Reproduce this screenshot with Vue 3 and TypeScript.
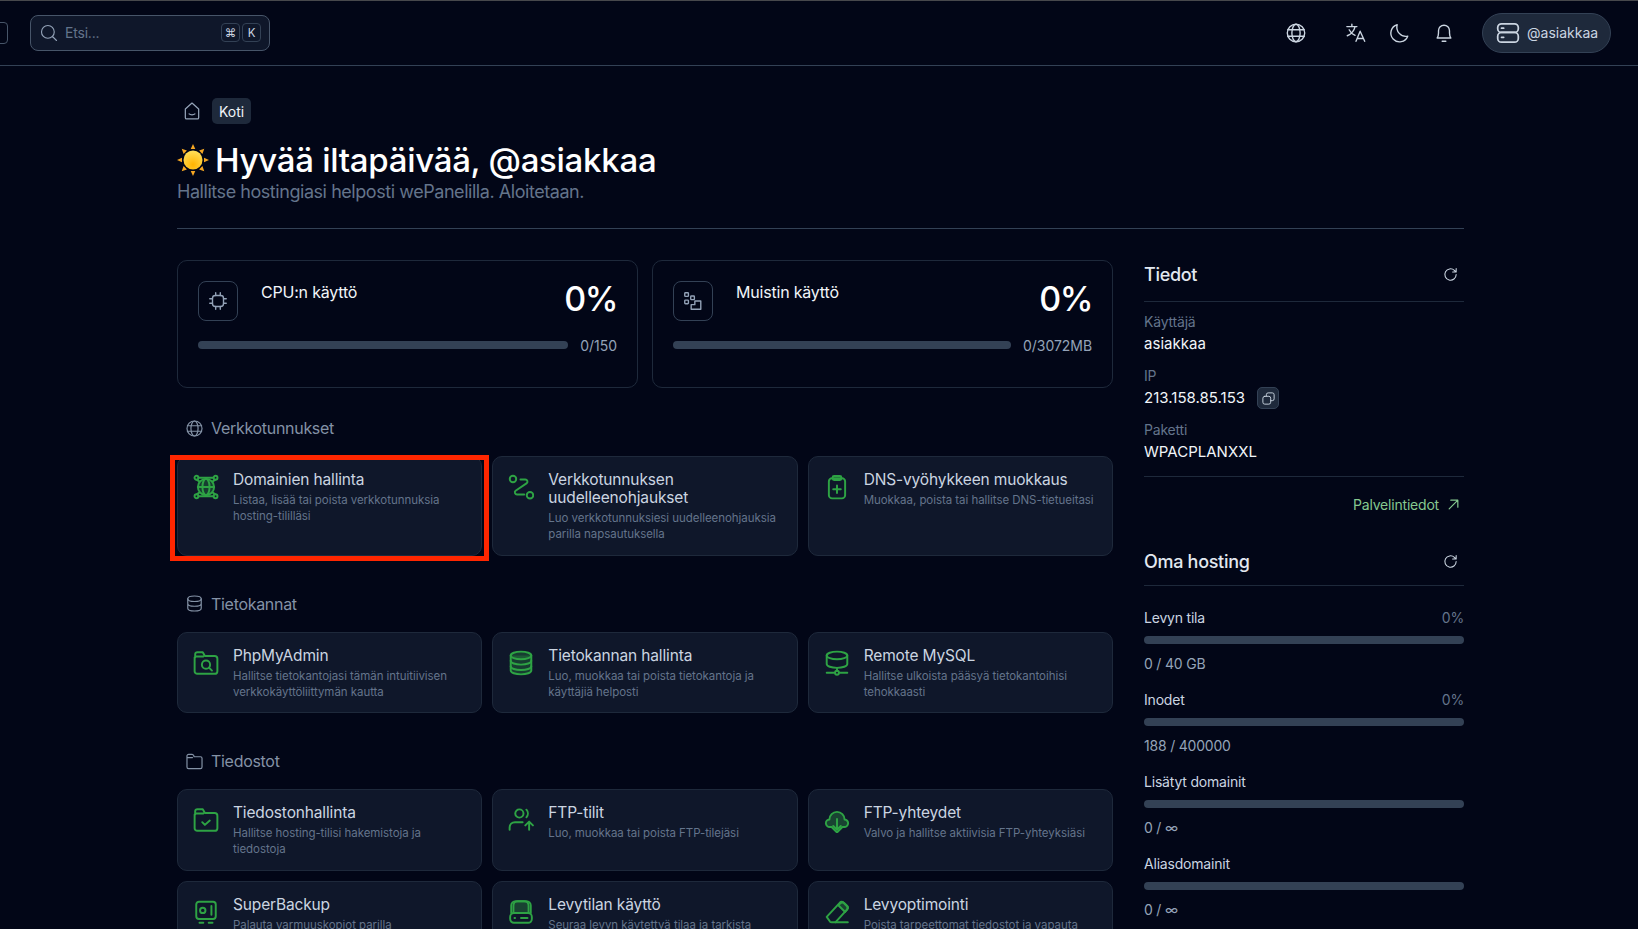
<script setup lang="ts">
interface Item { icon: string; title: string; desc: string; marked?: boolean }
interface Section { icon: string; name: string; items: Item[] }

const icons: Record<string, string> = {
  search: '<circle cx="10.5" cy="10.5" r="8.5"/><path d="M17 17l5 5"/>',
  globe: '<circle cx="12" cy="12" r="9.5"/><ellipse cx="12" cy="12" rx="4.5" ry="9.5"/><path d="M3 8.5h18M3 15.5h18"/>',
  translate: '<path d="M2 5h11M7.5 2.5V5M11 5c-1 4.500-4 8-8.500 10M4.500 8.500c1.500 3 4 5 6.500 6M12 21l4.500-11L21.500 21M13.500 18h6.500"/>',
  moon: '<path d="M10 3a9.500 9.500 0 1 0 11.500 12.500A10 10 0 0 1 10 3z"/>',
  bell: '<path d="M4.500 17.500c1-1.500 1.500-2.500 1.500-5.500V9.500a6 6 0 0 1 12 0V12c0 3 .500 4 1.500 5.500zM10 21h4"/>',
  server: '<rect x="2.500" y="3.500" width="19" height="8" rx="3.500"/><rect x="2.500" y="11.500" width="19" height="9" rx="3.500"/><path d="M6 7.500h2M6 16h2"/>',
  home: '<path d="M4 9.500 12 2.500l8 7V20a1.500 1.500 0 0 1-1.500 1.500h-13A1.500 1.500 0 0 1 4 20zM8.500 15.500c1.500 1.500 5.500 1.500 7 0"/>',
  chip: '<rect x="6" y="6" width="12" height="12" rx="3"/><path d="M9.500 3v3M14.500 3v3M9.500 18v3M14.500 18v3M3 9.500h3M3 14.500h3M18 9.500h3M18 14.500h3"/>',
  memory: '<rect x="3" y="3" width="4" height="4" rx=".8"/><rect x="9.500" y="6.500" width="4" height="4" rx=".8"/><rect x="3" y="11" width="4" height="4" rx=".8"/><path d="M10 21v-5h4v-4h6.500v9z"/>',
  db: '<ellipse cx="12" cy="6" rx="8.500" ry="3.500"/><path d="M3.500 6v12c0 2 3.800 3.500 8.500 3.500s8.500-1.500 8.500-3.500V6M3.500 12c0 2 3.800 3.500 8.500 3.500s8.500-1.500 8.500-3.500"/>',
  folder: '<path d="M2.500 7V5a2 2 0 0 1 2-2h4.500c1 0 1.500.5 2 1.500l.5 1.500h8a2 2 0 0 1 2 2v11a2 2 0 0 1-2 2h-15a2 2 0 0 1-2-2zM2.500 7h7"/>',
  refresh: '<path d="M20 12a8 8 0 1 1-2.500-5.800L20 8.500M20 3.500v5h-5"/>',
  copy: '<rect x="3" y="8.500" width="12.500" height="12.500" rx="3"/><path d="M8.500 8V6a3 3 0 0 1 3-3H18a3 3 0 0 1 3 3v6.500a3 3 0 0 1-3 3h-2"/>',
  arrow: '<path d="M4 20 20 4M7 4h13v13"/>',
  domains: '<circle cx="12" cy="12" r="7.500" fill="currentColor" fill-opacity=".28"/><ellipse cx="12" cy="12" rx="3.300" ry="7.500"/><path d="M4.500 12h15"/><circle cx="3.200" cy="3.500" r="1.800"/><circle cx="20.800" cy="3.500" r="1.800"/><circle cx="3.200" cy="20.500" r="1.800"/><circle cx="20.800" cy="20.500" r="1.800"/><path d="M5 3.500h14M5 20.500h14M3.500 5.300 6 7M20.500 5.300 18 7M3.500 18.700 6 17M20.500 18.700 18 17"/>',
  route: '<circle cx="4.600" cy="4.600" r="3"/><circle cx="20.300" cy="19.700" r="3"/><path d="M11.500 5H16a2 2 0 0 1 1.400 3.400L7 15.500A2 2 0 0 0 8.400 19H15"/>',
  clip: '<rect x="4.500" y="4" width="15" height="18.500" rx="3"/><rect x="8" y="1.800" width="8" height="3.700" rx="1.300"/><path d="M12 10.500v7M8.500 14h7"/>',
  folderSearch: '<path d="M2 7V4a2 2 0 0 1 2-2h5l2 3.500h9a2.500 2.500 0 0 1 2.500 2.500v11.500A2.500 2.500 0 0 1 20 22H4a2.500 2.500 0 0 1-2.500-2.500V7zM2 6h7.500"/><circle cx="12" cy="13.500" r="3.800"/><path d="M15 16.500l2.500 2.500"/>',
  dbStack: '<ellipse cx="12" cy="5" rx="9.500" ry="3.500" fill="currentColor" fill-opacity=".28"/><path d="M2.500 5v14c0 2 4.300 3.500 9.500 3.500s9.500-1.500 9.500-3.500V5" fill="currentColor" fill-opacity=".28"/><path d="M2.500 10c0 2 4.300 3.500 9.500 3.500s9.500-1.500 9.500-3.500M2.500 15c0 2 4.300 3.500 9.500 3.500s9.500-1.500 9.500-3.500"/>',
  dbNet: '<ellipse cx="12" cy="5" rx="9.500" ry="3.500"/><path d="M2.500 5v8c0 2 4.300 3.500 9.500 3.500s9.500-1.500 9.500-3.500V5M12 16.500v3M2.500 21h7M14.500 21h7"/><circle cx="12" cy="21" r="1.800"/>',
  folderCheck: '<path d="M2 7V4a2 2 0 0 1 2-2h5l2 3.500h9a2.500 2.500 0 0 1 2.500 2.500v11.500A2.500 2.500 0 0 1 20 22H4a2.500 2.500 0 0 1-2.500-2.500V7zM2 6h7.500"/><path d="M8.500 14l2.500 2.500 4.500-4"/>',
  personUp: '<circle cx="10.500" cy="6" r="3.800"/><path d="M17 2.500c1.800 2 1.800 5 0 7M1.500 21v-2c0-3 2-5 5-5h7M19.500 21v-7M16 17l3.500-3.500L23 17"/>',
  cloud: '<path d="M7 18.500H5.500a3 3 0 0 1-.5-7 7 7 0 0 1 14 0 3 3 0 0 1-.5 7H17l-5 5z" fill="currentColor" fill-opacity=".32"/><path d="M12 11v10M8.500 17.500l3.500 3.500 3.500-3.500"/>',
  safe: '<rect x="3" y="2.500" width="18" height="16" rx="2.500"/><circle cx="9" cy="10.500" r="2.500"/><path d="M17 6.500v8M6 22h3.500M14.500 22H18"/>',
  disk: '<path d="M5 13V6a4 4 0 0 1 4-4h6a4 4 0 0 1 4 4v7" fill="currentColor" fill-opacity=".32"/><path d="M3 13V6a4 4 0 0 1 4-4h10a4 4 0 0 1 4 4v7" /><rect x="2" y="13" width="20" height="9" rx="3.500"/><path d="M6 17.500h.5M12 17.500h6"/>',
  eraser: '<path d="M2.500 16.500 14.500 3.500a2.500 2.500 0 0 1 3.500 0l3 3a2.500 2.500 0 0 1 0 3.500L10.500 21.500H7a2 2 0 0 1-1.500-.7z"/><path d="M13 5.500l6.500 6.500 2-2.500a2 2 0 0 0 0-3l-2.700-2.700a2.500 2.500 0 0 0-3.300 0z" fill="currentColor" fill-opacity=".32"/><path d="M10.500 21.500H22"/>',
}

const sections: Section[] = [
  {
    icon: 'globe', name: 'Verkkotunnukset',
    items: [
      { icon: 'domains', title: 'Domainien hallinta', desc: 'Listaa, lisää tai poista verkkotunnuksia hosting-tililläsi', marked: true },
      { icon: 'route', title: 'Verkkotunnuksen uudelleenohjaukset', desc: 'Luo verkkotunnuksiesi uudelleenohjauksia parilla napsautuksella' },
      { icon: 'clip', title: 'DNS-vyöhykkeen muokkaus', desc: 'Muokkaa, poista tai hallitse DNS-tietueitasi' },
    ],
  },
  {
    icon: 'db', name: 'Tietokannat',
    items: [
      { icon: 'folderSearch', title: 'PhpMyAdmin', desc: 'Hallitse tietokantojasi tämän intuitiivisen verkkokäyttöliittymän kautta' },
      { icon: 'dbStack', title: 'Tietokannan hallinta', desc: 'Luo, muokkaa tai poista tietokantoja ja käyttäjiä helposti' },
      { icon: 'dbNet', title: 'Remote MySQL', desc: 'Hallitse ulkoista pääsyä tietokantoihisi tehokkaasti' },
    ],
  },
  {
    icon: 'folder', name: 'Tiedostot',
    items: [
      { icon: 'folderCheck', title: 'Tiedostonhallinta', desc: 'Hallitse hosting-tilisi hakemistoja ja tiedostoja' },
      { icon: 'personUp', title: 'FTP-tilit', desc: 'Luo, muokkaa tai poista FTP-tilejäsi' },
      { icon: 'cloud', title: 'FTP-yhteydet', desc: 'Valvo ja hallitse aktiivisia FTP-yhteyksiäsi' },
      { icon: 'safe', title: 'SuperBackup', desc: 'Palauta varmuuskopiot parilla napsautuksella' },
      { icon: 'disk', title: 'Levytilan käyttö', desc: 'Seuraa levyn käytettyä tilaa ja tarkista suurimmat kansiot' },
      { icon: 'eraser', title: 'Levyoptimointi', desc: 'Poista tarpeettomat tiedostot ja vapauta levytilaa' },
    ],
  },
]

const stats = [
  { icon: 'chip', label: 'CPU:n käyttö', value: '0/150' },
  { icon: 'memory', label: 'Muistin käyttö', value: '0/3072MB' },
]

const info = [
  { label: 'Käyttäjä', value: 'asiakkaa', copy: false },
  { label: 'IP', value: '213.158.85.153', copy: true },
  { label: 'Paketti', value: 'WPACPLANXXL', copy: false },
]

const usage = [
  { label: 'Levyn tila', pct: '0%', value: '0 / 40 GB' },
  { label: 'Inodet', pct: '0%', value: '188 / 400000' },
  { label: 'Lisätyt domainit', pct: '', value: '0 / ∞' },
  { label: 'Aliasdomainit', pct: '', value: '0 / ∞' },
]

const topIcons = ['globe', 'translate', 'moon', 'bell']
</script>

<template>
  <div class="page">
    <header class="topbar">
      <div class="left">
        <span class="stub"></span>
        <div class="search">
          <svg class="i search-i" viewBox="0 0 24 24" v-html="icons.search"></svg>
          <span class="placeholder">Etsi...</span>
          <span class="key">⌘</span>
          <span class="key">K</span>
        </div>
      </div>
      <div class="right">
        <svg v-for="t in topIcons" :key="t" class="i top-i" :class="'top-' + t" viewBox="0 0 24 24" v-html="icons[t]"></svg>
        <div class="pill">
          <svg class="i pill-i" viewBox="0 0 24 24" v-html="icons.server"></svg>
          <span>@asiakkaa</span>
        </div>
      </div>
    </header>

    <main class="main">
      <nav class="crumbs">
        <svg class="i home-i" viewBox="0 0 24 24" v-html="icons.home"></svg>
        <span class="chip">Koti</span>
      </nav>

      <h1 class="hello">
        <svg class="sun" viewBox="0 0 32 32">
          <defs>
            <radialGradient id="sunfill" cx="50%" cy="75%" r="75%">
              <stop offset="0%" stop-color="#ffb300" />
              <stop offset="100%" stop-color="#ffdf5a" />
            </radialGradient>
          </defs>
          <g fill="#f5a623">
            <path d="M16 0l2.300 5h-4.600zM16 32l-2.300-5h4.600zM0 16l5-2.300v4.600zM32 16l-5 2.300v-4.600z" />
            <path d="M4.700 4.700l5.200 1.900-3.300 3.300zM27.300 27.300l-5.200-1.900 3.300-3.300zM27.300 4.700l-1.900 5.200-3.300-3.300zM4.700 27.300l1.900-5.200 3.300 3.300z" />
          </g>
          <circle cx="16" cy="16" r="9.500" fill="url(#sunfill)" />
        </svg>
        <span>Hyvää iltapäivää, @asiakkaa</span>
      </h1>
      <p class="sub">Hallitse hostingiasi helposti wePanelilla. Aloitetaan.</p>
      <hr class="rule" />

      <div class="columns">
        <div class="content">
          <div class="stats">
            <div v-for="s in stats" :key="s.label" class="stat">
              <div class="stat-top">
                <span class="stat-box">
                  <svg class="i stat-i" viewBox="0 0 24 24" v-html="icons[s.icon]"></svg>
                </span>
                <span class="stat-label">{{ s.label }}</span>
                <span class="stat-num">0%</span>
              </div>
              <div class="stat-bottom">
                <span class="bar"></span>
                <span class="stat-val">{{ s.value }}</span>
              </div>
            </div>
          </div>

          <section v-for="sec in sections" :key="sec.name" class="section">
            <h2 class="sec-head">
              <svg class="i sec-i" viewBox="0 0 24 24" v-html="icons[sec.icon]"></svg>
              {{ sec.name }}
            </h2>
            <div class="grid">
              <a v-for="it in sec.items" :key="it.title" class="card">
                <svg class="i card-i" viewBox="0 0 24 24" v-html="icons[it.icon]"></svg>
                <div class="card-text">
                  <div class="card-title">{{ it.title }}</div>
                  <div class="card-desc">{{ it.desc }}</div>
                </div>
                <span v-if="it.marked" class="mark"></span>
              </a>
            </div>
          </section>
        </div>

        <aside class="side">
          <div class="side-head">
            <h3>Tiedot</h3>
            <svg class="i ref-i" viewBox="0 0 24 24" v-html="icons.refresh"></svg>
          </div>
          <div class="facts">
            <div v-for="f in info" :key="f.label" class="fact">
              <div class="fact-label">{{ f.label }}</div>
              <div class="fact-value">
                {{ f.value }}
                <span v-if="f.copy" class="copy">
                  <svg class="i copy-i" viewBox="0 0 24 24" v-html="icons.copy"></svg>
                </span>
              </div>
            </div>
          </div>
          <a class="more">
            Palvelintiedot
            <svg class="i more-i" viewBox="0 0 24 24" v-html="icons.arrow"></svg>
          </a>

          <div class="side-head second">
            <h3>Oma hosting</h3>
            <svg class="i ref-i" viewBox="0 0 24 24" v-html="icons.refresh"></svg>
          </div>
          <div class="usage">
            <div v-for="u in usage" :key="u.label" class="use">
              <div class="use-top">
                <span>{{ u.label }}</span>
                <span class="use-pct">{{ u.pct }}</span>
              </div>
              <span class="bar full"></span>
              <div class="use-val">{{ u.value }}</div>
            </div>
          </div>
        </aside>
      </div>
    </main>
  </div>
</template>

<style>
html, body { background: #020617; overflow: hidden; }
</style>

<style scoped>
.page {
  height: 929px;
  overflow: hidden;
  background: #020617;
  font-family: Inter, "Liberation Sans", sans-serif;
  color: #e2e8f0;
  border-top: 1px solid #47484c;
  box-sizing: border-box;
}
.i {
  fill: none;
  stroke: currentColor;
  stroke-width: 1.5;
  stroke-linecap: round;
  stroke-linejoin: round;
  flex: none;
  display: block;
}
.topbar {
  height: 65px;
  box-sizing: border-box;
  border-bottom: 1px solid #334155;
  display: flex;
  align-items: center;
  justify-content: space-between;
  padding: 0 27px 1px 0;
}
.left { display: flex; align-items: center; gap: 22px; }
.stub {
  display: block;
  width: 16px;
  height: 22px;
  margin-left: -8px;
  box-sizing: border-box;
  border: 1px solid #475569;
  border-radius: 4px;
}
.search {
  width: 240px;
  height: 36px;
  box-sizing: border-box;
  border: 1px solid #475569;
  border-radius: 8px;
  background: #0f172a;
  display: flex;
  align-items: center;
  padding: 0 8px 0 9px;
}
.search-i { width: 18px; height: 18px; color: #94a3b8; }
.placeholder { flex: 1; margin-left: 7px; font-size: 14px; color: #64748b; letter-spacing: -0.2px; }
.key {
  width: 19px;
  height: 19px;
  margin-left: 2px;
  box-sizing: border-box;
  border: 1px solid #334155;
  border-radius: 4px;
  font-size: 11.500px;
  color: #cbd5e1;
  display: flex;
  align-items: center;
  justify-content: center;
}
.right { display: flex; align-items: center; }
.top-i { width: 22px; height: 22px; color: #cbd5e1; }
.top-globe { margin-right: 38px; }
.top-translate { margin-right: 21px; }
.top-moon { margin-right: 23px; }
.top-bell { margin-right: 27px; }
.pill {
  height: 40px;
  width: 129px;
  box-sizing: border-box;
  border: 1px solid #334155;
  border-radius: 20px;
  background: #1e293b;
  display: flex;
  align-items: center;
  gap: 6px;
  padding-left: 12px;
  font-size: 14px;
  color: #cbd5e1;
}
.pill-i { width: 26px; height: 26px; stroke-width: 1.6; }
.main {
  padding: 32px 174px 0 177px;
}
.crumbs { display: flex; align-items: center; height: 26px; gap: 10px; padding-left: 5px; }
.home-i { width: 20px; height: 20px; color: #94a3b8; }
.chip {
  background: #1e293b;
  border-radius: 5px;
  height: 26px;
  padding: 0 7px;
  display: flex;
  align-items: center;
  font-size: 14px;
  color: #f1f5f9;
}
.hello {
  margin: 16px 0 0;
  height: 40px;
  display: flex;
  align-items: center;
  gap: 6px;
  font-size: 33px;
  font-weight: 500;
  color: #fff;
  letter-spacing: -0.28px;
}
.sun { width: 32px; height: 32px; flex: none; }
.sub {
  margin: 0;
  font-size: 18px;
  line-height: 24px;
  color: #64748b;
  letter-spacing: -0.45px;
}
.rule {
  border: 0;
  border-top: 1px solid #334155;
  margin: 24px 0 0;
}
.columns { display: flex; gap: 31px; margin-top: 31px; }
.content { width: 936px; flex: none; }
.side { width: 320px; flex: none; }
.stats { display: grid; grid-template-columns: 1fr 1fr; gap: 14px; }
.stat {
  height: 128px;
  box-sizing: border-box;
  border: 1px solid #1e293b;
  border-radius: 10px;
  padding: 20px 20px 0 20px;
}
.stat-top { display: flex; align-items: flex-start; height: 40px; }
.stat-box {
  width: 40px;
  height: 40px;
  box-sizing: border-box;
  border: 1px solid #334155;
  border-radius: 8px;
  display: flex;
  align-items: center;
  justify-content: center;
}
.stat-i { width: 22px; height: 22px; color: #94a3b8; }
.stat-label { margin-left: 23px; font-size: 16px; line-height: 22px; color: #f1f5f9; letter-spacing: -0.2px; }
.stat-num { margin-left: auto; font-size: 34px; line-height: 36px; font-weight: 500; color: #fff; letter-spacing: -1.5px; }
.stat-bottom { display: flex; align-items: center; gap: 12px; margin-top: 16px; height: 16px; }
.bar {
  display: block;
  flex: 1;
  height: 8px;
  border-radius: 4px;
  background: #334155;
}
.stat-val { font-size: 14px; color: #94a3b8; letter-spacing: -0.05px; }
.section { margin-top: 36px; }
.stats + .section { margin-top: 28px; }
.sec-head {
  margin: 0 0 16px;
  height: 24px;
  display: flex;
  align-items: center;
  gap: 7px;
  padding-left: 8px;
  font-size: 16px;
  font-weight: 400;
  color: #8492a6;
  letter-spacing: -0.3px;
}
.sec-i { width: 19px; height: 19px; color: #8492a6; }
.grid { display: grid; grid-template-columns: repeat(3, 1fr); gap: 10px; }
.card {
  position: relative;
  display: flex;
  gap: 14px;
  box-sizing: border-box;
  border: 1px solid #1e293b;
  border-radius: 10px;
  background: #0f172a;
  padding: 14px 15px 12.500px;
}
.card-i { width: 26px; height: 26px; color: #2ea344; margin-top: 3px; stroke-width: 1.8; }
.card-title { font-size: 15.500px; line-height: 18px; color: #cbd5e1; letter-spacing: -0.15px; }
.card-desc { font-size: 11.500px; line-height: 16px; margin-top: 3px; color: #64748b; letter-spacing: -0.05px; }
.mark {
  position: absolute;
  top: -2px;
  left: -8px;
  right: -8px;
  bottom: -6px;
  border: 5px solid #ff2600;
  pointer-events: none;
}
.side-head {
  display: flex;
  align-items: center;
  justify-content: space-between;
  border-bottom: 1px solid #1e293b;
  padding-bottom: 13px;
  height: 28px;
}
.side-head.second { padding-bottom: 10px; margin-top: 33px; }
.side-head h3 { margin: 0; font-size: 18px; font-weight: 500; color: #e2e8f0; letter-spacing: -0.3px; }
.ref-i { width: 17px; height: 17px; margin-right: 5px; color: #cbd5e1; }
.facts {
  padding: 9px 0 13px;
  border-bottom: 1px solid #1e293b;
  display: flex;
  flex-direction: column;
  gap: 10px;
}
.fact-label { font-size: 14px; line-height: 22px; color: #64748b; letter-spacing: -0.2px; }
.fact-value { display: flex; align-items: center; gap: 12px; font-size: 15px; line-height: 22px; color: #f1f5f9; letter-spacing: 0.02px; }
.copy {
  width: 22px;
  height: 22px;
  box-sizing: border-box;
  border: 1px solid #334155;
  border-radius: 5px;
  background: #1e293b;
  display: flex;
  align-items: center;
  justify-content: center;
}
.copy-i { width: 15px; height: 15px; color: #cbd5e1; }
.more {
  display: flex;
  justify-content: flex-end;
  align-items: center;
  gap: 8px;
  height: 20px;
  margin-top: 17px;
  padding-right: 4px;
  font-size: 14px;
  color: #86c990;
  letter-spacing: -0.2px;
}
.more-i { width: 13px; height: 13px; stroke-width: 2.200; }
.usage { padding-top: 22px; display: flex; flex-direction: column; gap: 0; }
.use { height: 82px; }
.use-top {
  display: flex;
  justify-content: space-between;
  font-size: 14px;
  line-height: 20px;
  color: #cbd5e1;
  letter-spacing: -0.2px;
}
.use-pct { color: #64748b; }
.bar.full { margin-top: 8px; }
.use-val { font-size: 14px; line-height: 20px; margin-top: 10px; color: #94a3b8; letter-spacing: -0.2px; }
</style>
